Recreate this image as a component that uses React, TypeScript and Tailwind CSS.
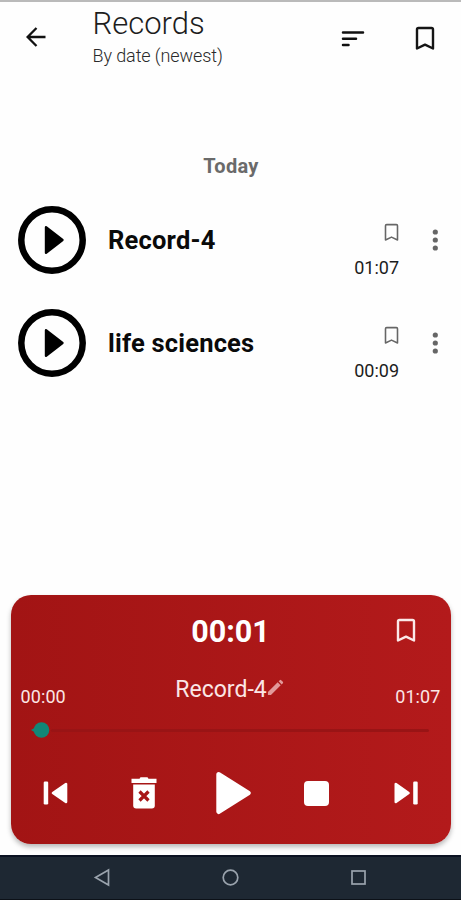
interface RecordItem {
  name: string;
  duration: string;
}

const RECORDS: RecordItem[] = [
  { name: "Record-4", duration: "01:07" },
  { name: "life sciences", duration: "00:09" },
];

function BookmarkIcon({ className, strokeWidth = 2.4 }: { className: string; strokeWidth?: number }) {
  return (
    <svg viewBox="0 0 20 24" className={className} fill="none" stroke="currentColor" strokeWidth={strokeWidth} strokeLinejoin="round">
      <path d="M2 3a1.5 1.5 0 0 1 1.5-1.5h13A1.5 1.5 0 0 1 18 3v19l-8-3.8L2 22Z" />
    </svg>
  );
}

function RecordRow({ name, duration }: RecordItem) {
  return (
    <div className="flex h-[68px] items-center pl-[18px]">
      <svg viewBox="0 0 68 68" className="size-[68px] shrink-0 text-black">
        <circle cx="34" cy="34" r="30.7" fill="none" stroke="currentColor" strokeWidth="6.5" />
        <path d="M28 21.2 44.5 34 28 46.8Z" fill="currentColor" stroke="currentColor" strokeWidth="2.4" strokeLinejoin="round" />
      </svg>
      <span className="ml-[22px] flex-1 whitespace-nowrap text-[25.5px] leading-8 font-bold tracking-[0.2px] text-[#0a0a0a]">{name}</span>
      <div className="flex w-[46px] flex-col items-end pt-[23px]">
        <BookmarkIcon className="h-[19px] w-[15px] text-[#666]" strokeWidth={2.1} />
        <span className="mt-[14px] text-[18px] leading-6 text-[#1c1c1c]">{duration}</span>
      </div>
      <svg viewBox="0 0 8 24" className="mr-[22px] ml-8 h-6 w-2 fill-[#666]">
        <circle cx="4.3" cy="4" r="2.6" />
        <circle cx="4.3" cy="12" r="2.6" />
        <circle cx="4.3" cy="20" r="2.6" />
      </svg>
    </div>
  );
}

function Player() {
  return (
    <section className="mx-[10.5px] h-[249px] rounded-[20px] bg-linear-to-r from-[#a21414] to-[#b31a1b] text-white shadow-[0_3px_5px_rgba(0,0,0,0.28)]">
      <div className="grid h-[73px] grid-cols-[1fr_auto_1fr] items-center">
        <span />
        <span className="text-[30.5px] leading-9 font-bold">00:01</span>
        <BookmarkIcon className="mt-[-2px] mr-[35px] h-[25px] w-5 justify-self-end text-[#fbe9e9]" />
      </div>

      <div className="grid h-[46px] grid-cols-[1fr_auto_1fr] px-[10px] text-[#fbe6e6]">
        <span className="pt-[17px] text-[18px] leading-6 tracking-[0.1px]">00:00</span>
        <div className="flex items-start pt-[6px]">
          <span className="text-[23px] leading-8">Record-4</span>
          <svg viewBox="0 0 18 18" className="mt-[5px] mr-[2px] size-[17px] fill-[#e29a9a]">
            <path d="M1 17v-3.2L11.3 3.5 14.5 6.7 4.2 17ZM12.3 2.5l1.3-1.3a1 1 0 0 1 1.4 0l1.8 1.800a1 1 0 0 1 0 1.400L15.5 5.700Z" />
          </svg>
        </div>
        <span className="pt-[17px] text-right text-[18px] leading-6 tracking-[0.1px]">01:07</span>
      </div>

      {/* Seek bar */}
      <div className="flex h-8 items-center pr-[22px] pl-5">
        <svg viewBox="0 0 20 18" className="h-[18px] w-5 shrink-0 fill-[#128677]">
          <path d="M0 9 5 6v6Z" />
          <circle cx="10.5" cy="9" r="7.8" />
        </svg>
        <div className="h-[3px] flex-1 rounded-full bg-[#991415]" />
      </div>

      <div className="flex h-[94px] items-center justify-between px-8">
        <svg viewBox="0 0 26 26" className="size-[26px]" fill="currentColor">
          <rect x="0.7" y="1.5" width="4.5" height="23" rx="1.2" />
          <path d="M23 4v18L10 13Z" stroke="currentColor" strokeWidth="2.6" strokeLinejoin="round" />
        </svg>
        <svg viewBox="0 0 26 32" className="ml-[1px] h-8 w-[26px]">
          <path d="M0.5 1.8h8L9.5.3h7l1 1.500h8V6h-25Z" fill="currentColor" />
          <path d="M2.2 7.5h21.6v21a3 3 0 0 1-3 3H5.2a3 3 0 0 1-3-3Z" fill="currentColor" />
          <path d="m8.5 14.5 9 9m0-9-9 9" stroke="#a81617" strokeWidth="3.200" />
        </svg>
        <svg viewBox="0 0 36 44" className="ml-[-2px] h-11 w-9" fill="currentColor" stroke="currentColor" strokeWidth="5" strokeLinejoin="round">
          <path d="M2.8 3.5 32.2 22 2.8 40.5Z" />
        </svg>
        <div className="mr-[3px] ml-[-9px] size-[25px] rounded-[4px] bg-white" />
        <svg viewBox="0 0 26 26" className="size-[26px]" fill="currentColor">
          <path d="M2.8 4v18L15.5 13Z" stroke="currentColor" strokeWidth="2.6" strokeLinejoin="round" />
          <rect x="20.2" y="1.5" width="4.5" height="23" rx="1.2" />
        </svg>
      </div>
    </section>
  );
}

export default function App() {
  return (
    <div className="flex h-[900px] w-[461px] flex-col overflow-hidden border-t-2 border-[#bababa] bg-[#fefefe] font-['Roboto',sans-serif]">
      <header className="flex h-[78px] items-start">
        <svg viewBox="0 0 20 20" className="mt-[25px] ml-[26px] size-5 shrink-0" fill="none" stroke="#111" strokeWidth="2.3">
          <path d="M19.5 10H2M10.5 1 1.6 10l8.9 9" />
        </svg>
        <div className="ml-[46.5px] flex-1 whitespace-nowrap">
          <h1 className="mt-[4px] text-[31px] leading-9 font-light text-[#1d1d1d]">Records</h1>
          <p className="mt-[2px] text-[18px] leading-6 font-light tracking-[-0.1px] text-[#2a2a2a]">By date (newest)</p>
        </div>
        <svg viewBox="0 0 24 18" className="mt-[28px] mr-[50px] h-[18px] w-6" stroke="#111" strokeWidth="2.5" strokeLinecap="round">
          <path d="M2 2.5h20M2 8.7h13M2 15h5.5" />
        </svg>
        <BookmarkIcon className="mt-6 mr-[26px] h-[25px] w-5 text-[#151515]" />
      </header>

      <main className="flex-1">
        <h2 className="mt-[74px] pl-[1px] text-center text-[20px] leading-6 font-bold tracking-[0.3px] text-[#6a6a6a]">Today</h2>
        <div className="mt-[28px] flex flex-col gap-[34.5px]">
          {RECORDS.map((record) => (
            <RecordRow key={record.name} {...record} />
          ))}
        </div>
      </main>

      <Player />

      <nav className="mt-[10.5px] flex h-[45.5px] shrink-0 items-center border-t-2 border-b border-t-[#0b1222] border-b-[#0c1118] bg-[#1e2833]">
        <svg viewBox="0 0 461 44" className="h-11 w-[461px]" fill="none" stroke="#9aa3ad" strokeWidth="1.7">
          <path d="M108.5 14v15L95.5 21.5Z" />
          <circle cx="230.5" cy="21.5" r="7.3" />
          <rect x="352" y="15" width="13" height="13" />
        </svg>
      </nav>
    </div>
  );
}
